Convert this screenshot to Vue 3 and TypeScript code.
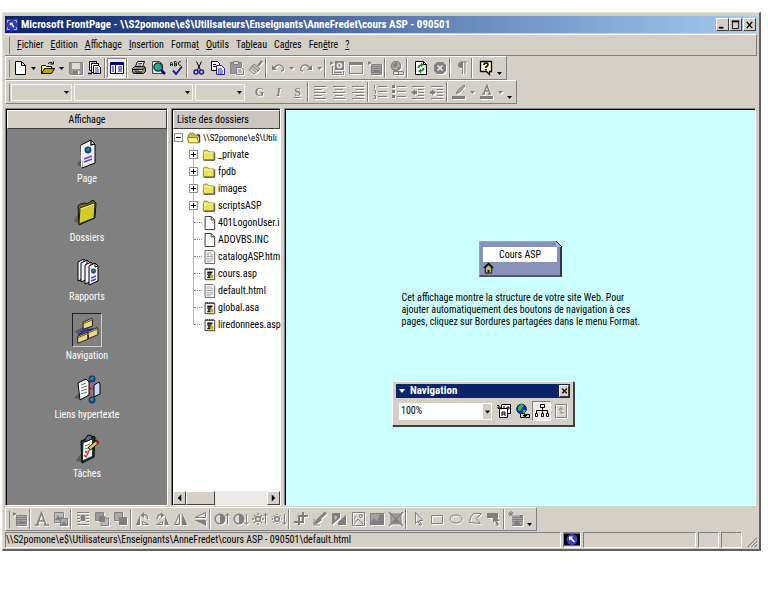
<script setup lang="ts">
import { ref } from 'vue'

type Item = { kind: 'icon' | 'arrow' | 'more' | 'sep' | 'wide'; name?: string; label?: string; off?: boolean; on?: boolean }

const icon = (name: string, label: string): Item => ({ kind: 'icon', name, label })
const off = (name: string, label: string): Item => ({ kind: 'icon', name, label, off: true })
const arrow: Item = { kind: 'arrow' }
const arrowOff: Item = { kind: 'arrow', off: true }
const sep: Item = { kind: 'sep' }
const wide: Item = { kind: 'wide' }
const more: Item = { kind: 'more' }

const G = '#808080'
const glyphs: Record<string, string> = {
  new: '<path d="M3.5 1.5h6l4 4v9h-10z" fill="#fff" stroke="#000"/><path d="M9.500 1.500v4h4" fill="none" stroke="#000"/>',
  open: '<path d="M1.500 13.500v-8h4l1 1h5v3" fill="#ffff66" stroke="#000"/><path d="M1.500 13.500l3-5h10l-3 5z" fill="#b5a800" stroke="#000"/><path d="M8 3.500q3-2.500 5 0M13.500 1.500v2.500h-3" fill="none" stroke="#000"/>',
  save: `<path d="M1.500 2.500h13v12h-12l-1-1z" fill="#999" stroke="${G}"/><path d="M4 3h8v6H4z" fill="#dedbd5"/><path d="M5 11h7v3H5z" fill="${G}"/><path d="M10 11h1.500v3H10z" fill="#fff"/>`,
  publish: '<path d="M2.500 1.500h7v9h-7z" fill="#fff" stroke="#000"/><path d="M4.500 3.500h7v9h-7z" fill="#fff" stroke="#000"/><path d="M6.500 5.500h5l2 2v6h-7z" fill="#fff" stroke="#000"/><path d="M8 8h3M8 10h4M4 3h4M8 12h4" stroke="#333399"/><path d="M1 13.500h4" stroke="#000080" stroke-width="1.500"/>',
  folders: '<path d="M1.500 2.500h13v11h-13z" fill="#fff" stroke="#000080"/><path d="M1 3h14v2H1z" fill="#000080"/><path d="M6.500 4v9" stroke="#000080"/><path d="M3 7h2M3 9h2M3 11h2" stroke="#000080"/><path d="M9 7h4M9 9h4M9 11h4" stroke="#000080"/>',
  print: '<path d="M4.500 6.500l2-5h7l-2 5" fill="#fff" stroke="#000"/><path d="M7 3.500h4M6.500 5h4" stroke="#555"/><path d="M1.500 8.500l2-2h10l1 2v3l-2 2h-10l-1-2z" fill="#888" stroke="#000"/><path d="M2 9.500h10l2-2M4 12h7" stroke="#111" fill="none"/><path d="M8 10.500h3" stroke="#ffff00"/>',
  preview: '<path d="M2.500 1.500h7l3 3v9h-10z" fill="#eee" stroke="#444"/><circle cx="8" cy="7" r="4.200" fill="#22a0b0" stroke="#000"/><path d="M5 6l2-2 2 1-1 3-3 1z" fill="#33bb44"/><path d="M11 10l4 4" stroke="#000080" stroke-width="2.500"/>',
  spell: '<path d="M1.500 6V3.500l1-1.500 1 1.500V6M1.500 4.500h2M5.500 1.500V6h1.500l1-1-1-1H5.500M5.500 1.500h1.500l1 1-1 1.500M12 2l-1-.500-1.500 1v2l1.500 1 1-.500" fill="none" stroke="#222"/><path d="M4 10.500l3 3.500 6-7.500" fill="none" stroke="#1c1ca0" stroke-width="2"/>',
  cut: '<path d="M5.500 1.500l4 8.500M10.500 1.500l-4 8.500" stroke="#000" fill="none"/><circle cx="5" cy="12" r="2" fill="none" stroke="#1c1ca0" stroke-width="1.500"/><circle cx="10.500" cy="12" r="2" fill="none" stroke="#1c1ca0" stroke-width="1.500"/>',
  copy: '<path d="M1.500 1.500h6l2 2v7h-8z" fill="#fff" stroke="#000"/><path d="M3 4.500h3M3 6.500h4" stroke="#000080"/><path d="M6.500 5.500h5l3 3v6h-8z" fill="#fff" stroke="#1c1ca0"/><path d="M8 9h4M8 11h5M8 13h5" stroke="#1c1ca0"/>',
  paste: `<path d="M1.500 2.500h11v11h-11z" fill="#999" stroke="${G}"/><path d="M4.500 1.500h5v3h-5z" fill="#ddd" stroke="${G}"/><path d="M7.500 7.500h5l2 2v5h-7z" fill="#e8e6e2" stroke="${G}"/><path d="M9 10h3M9 12h4" stroke="${G}"/>`,
  brush: `<path d="M14 1l-4 5" stroke="${G}" stroke-width="2.500"/><path d="M6 4l6 5-2 2-6-5z" fill="#bbb" stroke="${G}"/><path d="M4 6l6 5-4 3-5-4z" fill="#d4d0c8" stroke="${G}"/><path d="M3 8l5 4" stroke="${G}"/>`,
  undo: `<path d="M2 5v5h5z" fill="${G}"/><path d="M4 8q3-4 6-3t3.500 4q0 2-2.500 2" fill="none" stroke="${G}" stroke-width="1.300"/>`,
  redo: `<path d="M14 5v5H9z" fill="${G}"/><path d="M12 8q-3-4-6-3T2.500 9q0 2 2.500 2" fill="none" stroke="${G}" stroke-width="1.300"/>`,
  component: `<path d="M1 1l4 2-4 2zM6 1h9v9H6z" fill="${G}"/><circle cx="10.500" cy="5.500" r="3" fill="#ddd"/><path d="M9 5l2-1v3z" fill="${G}"/><path d="M3.500 6v8.500h11V11" fill="none" stroke="${G}"/><path d="M5 12.500h8" stroke="${G}" stroke-width="1.500"/>`,
  table: `<path d="M1.500 2.500h13v11h-13z" fill="none" stroke="${G}"/><path d="M1 2h14v3H1z" fill="${G}"/>`,
  picture: `<path d="M1 1l4 2-4 2z" fill="${G}"/><path d="M4.500 4.500h10v10h-10z" fill="#aaa" stroke="${G}"/><path d="M5 6.500h9M5 8.500h9M5 10.500h9M5 12.500h9" stroke="${G}"/><path d="M5 13l4-4 2 2 1-1 2 3z" fill="${G}"/>`,
  link: `<circle cx="7" cy="6" r="4.500" fill="#b0aeaa" stroke="${G}" stroke-width="1.500"/><path d="M4 5l3-3 2 1-1 3-3 2zM8 7l3 0-1 3z" fill="${G}"/><path d="M4.500 11.500h5v3h-5zM9.500 11.500h5v3h-5z" fill="#ddd" stroke="${G}"/>`,
  refresh: '<path d="M2.500 1.500h8l3 3v10h-11z" fill="#fff" stroke="#000"/><path d="M10.500 1.500v3h3" fill="none" stroke="#000"/><path d="M5.500 8q0-3 3.500-3M10.500 8q0 3-3.500 3" fill="none" stroke="#118822" stroke-width="1.700"/><path d="M8 2.500l3 2.500-3 2zM8 9l-3 2 3 2.500z" fill="#118822"/>',
  stop: `<path d="M5 2h6l3 3v6l-3 3H5l-3-3V5z" fill="${G}"/><path d="M5.500 5.500l5 5M10.500 5.500l-5 5" stroke="#eee" stroke-width="1.500"/>`,
  para: `<path d="M6 2h7M8.500 2v12M11 2v12" stroke="${G}" fill="none"/><path d="M8.500 2H7Q4 2 4 5t3 3h1.500z" fill="${G}"/>`,
  help: '<path d="M2.500 1.500h11v10h-2v3l-3-3h-6z" fill="#ffffcc" stroke="#000" stroke-width="1.300"/><path d="M6 5q0-2 2-2t2 1.800q0 1-2 2.200v1" fill="none" stroke="#000" stroke-width="1.500"/><path d="M7.200 9h1.600v1.500H7.200z"/>',
  left: `<path d="M2 2.500h12M2 5.500h8M2 8.500h12M2 11.500h8M2 14.500h12" stroke="${G}"/>`,
  center: `<path d="M2 2.500h12M4 5.500h8M2 8.500h12M4 11.500h8M2 14.500h12" stroke="${G}"/>`,
  right: `<path d="M2 2.500h12M6 5.500h8M2 8.500h12M6 11.500h8M2 14.500h12" stroke="${G}"/>`,
  numbers: `<path d="M2.500 1v3.500M1.500 6.500h2v3M1.500 11.500h2v3h-2M6 2.500h9M6 7.500h9M6 12.500h9" fill="none" stroke="${G}"/>`,
  bullets: `<path d="M1 1h3v3H1zM1 6h3v3H1zM1 11h3v3H1z" fill="${G}"/><path d="M6 2.500h9M6 7.500h9M6 12.500h9" stroke="${G}"/>`,
  outdent: `<path d="M2 2.500h12M8 5.500h6M8 8.500h6M8 11.500h6M2 14.500h12" stroke="${G}"/><path d="M1 8.500l4-3v6zM5 7h2v3H5z" fill="${G}"/>`,
  indent: `<path d="M2 2.500h12M8 5.500h6M8 8.500h6M8 11.500h6M2 14.500h12" stroke="${G}"/><path d="M7 8.500l-4-3v6zM1 7h2v3H1z" fill="${G}"/>`,
  highlight: `<path d="M1 12h13v3H1z" fill="${G}"/><path d="M13 1L7 6l-2 4 4-2 5-6z" fill="#aaa" stroke="${G}"/>`,
  fontcolor: `<path d="M1 12h13v3H1z" fill="${G}"/><path d="M3 10h3M9 10h3M4.500 10L8 1.500l3 8.500M5.500 7h5" fill="none" stroke="${G}" stroke-width="1.500"/>`,
  bigA: `<path d="M1 14h4M10 14h5M3 14L7.500 2 12 14M5 10h6" fill="none" stroke="${G}" stroke-width="1.700"/>`,
  auto: `<path d="M1.500 1.500h9v10h-9z" fill="#bbb" stroke="${G}"/><path d="M2 9l3-5 2 3 2-2 1 5z" fill="${G}"/><path d="M7.500 7.500h7v7h-7z" fill="#aaa" stroke="${G}"/><path d="M8 14l3-4 3 4z" fill="${G}"/>`,
  wrap: `<path d="M2 1.500h12M2 4.500h3M11 4.500h3M2 7.500h3M11 7.500h3M2 10.500h3M11 10.500h3M2 13.500h12" stroke="${G}"/><path d="M5.500 4.500l2.500-1 2.500 1V10h-5z" fill="${G}"/>`,
  forward: `<path d="M1.500 1.500h8v8h-8z" fill="#999" stroke="${G}"/><path d="M7 11.500v3h7.500V7H11" fill="#bbb" stroke="${G}"/><path d="M5 5h6v6H5z" fill="${G}"/>`,
  back: `<path d="M1.500 1.500h8v8h-8z" fill="#aaa" stroke="${G}"/><path d="M6 6h8v8H6z" fill="${G}"/>`,
  rotl: `<path d="M1 14L5 4v10z" fill="${G}"/><path d="M7.500 13.500v-3l6 3z" fill="none" stroke="${G}"/><path d="M7 4q5-2 6 4" fill="none" stroke="${G}" stroke-width="1.500"/><path d="M9 1L5.500 4.500 9 7z" fill="${G}"/>`,
  rotr: `<path d="M15 14L11 4v10z" fill="${G}"/><path d="M8.500 13.500v-3l-6 3z" fill="none" stroke="${G}"/><path d="M9 4Q4 2 3 8" fill="none" stroke="${G}" stroke-width="1.500"/><path d="M7 1l3.500 3.500L7 7z" fill="${G}"/>`,
  fliph: `<path d="M1.500 13.500L6.500 3v10.500z" fill="none" stroke="${G}"/><path d="M9 14V2l5.500 12z" fill="${G}"/>`,
  flipv: `<path d="M13.500 1.500v5H3z" fill="none" stroke="${G}"/><path d="M14 9v6L2 9z" fill="${G}"/>`,
  contUp: `<circle cx="6" cy="8" r="4.800" fill="#ddd" stroke="${G}" stroke-width="1.500"/><path d="M6 3a5 5 0 0 1 0 10z" fill="${G}"/><path d="M13.500 13V3M11.500 5l2-2.500 2 2.500" fill="none" stroke="${G}"/>`,
  contDn: `<circle cx="6" cy="8" r="4.800" fill="#ddd" stroke="${G}" stroke-width="1.500"/><path d="M6 3a5 5 0 0 1 0 10z" fill="${G}"/><path d="M13.500 3v10M11.500 11l2 2.500 2-2.500" fill="none" stroke="${G}"/>`,
  briUp: `<circle cx="6" cy="8" r="2.500" fill="#ddd" stroke="${G}" stroke-width="1.500"/><path d="M6 2v2M6 12v2M0 8h2M10 8h2M2 4l1.500 1.500M10 4L8.500 5.500M2 12l1.500-1.500M10 12l-1.500-1.500" stroke="${G}" stroke-width="1.300"/><path d="M13.500 13V3M11.500 5l2-2.500 2 2.500" fill="none" stroke="${G}"/>`,
  briDn: `<circle cx="6" cy="8" r="2.300" fill="#ddd" stroke="${G}" stroke-width="1.500"/><path d="M6 3v1M6 12v1M1 8h1M10 8h1M2.500 4.500l1 1M9.500 4.500l-1 1M2.500 11.500l1-1M9.500 11.500l-1-1" stroke="${G}" stroke-width="1.300"/><path d="M13.500 3v10M11.500 11l2 2.500 2-2.500" fill="none" stroke="${G}"/>`,
  crop: `<path d="M6 4v10M10 1v10M1 11h10M5 5h10" fill="none" stroke="${G}" stroke-width="2"/>`,
  line: `<path d="M14 1.500L7 8" stroke="${G}" stroke-width="3"/><path d="M7 6l3 3-5 4-3 1 1-4z" fill="${G}"/><path d="M2 8v6h6" fill="none" stroke="${G}"/>`,
  bw: `<path d="M1 2h8v5L1 14z" fill="${G}"/><path d="M15 14H7V11l8-7z" fill="${G}"/><path d="M3 5h3v2l-2 2z" fill="#bbb"/>`,
  wash: `<path d="M2.500 1.500h12v13h-12z" fill="none" stroke="${G}"/><circle cx="11" cy="5" r="1.500" fill="none" stroke="${G}"/><path d="M4 13l4-5 5 5M4 8l2-3" fill="none" stroke="${G}"/>`,
  bevel: `<path d="M1 2h14v12H1z" fill="#a5a39f"/><path d="M1 14V12l4-5 3 3 3-7 4 1v10z" fill="${G}"/><path d="M1.500 2.500h13v11h-13z" fill="none" stroke="${G}"/>`,
  resample: `<path d="M3 3h10v10H3z" fill="#a5a39f" stroke="${G}"/><path d="M1 1l14 14M15 1L1 15" stroke="${G}" stroke-width="1.500"/><path d="M4 12l4-6 4 6z" fill="${G}"/>`,
  select: `<path d="M5.500 1.500v11l2.500-2.500 2 4.500 1.500-.700-2-4.300h3.500z" fill="none" stroke="${G}"/>`,
  rect: `<path d="M2.500 4.500h11v8h-11z" fill="none" stroke="${G}"/>`,
  oval: `<ellipse cx="8" cy="8" rx="6" ry="4" fill="none" stroke="${G}"/>`,
  poly: `<path d="M2.500 11.500l1-5 3-4h8l-5 5 4 5z" fill="none" stroke="${G}"/>`,
  hotspot: `<path d="M1 2h11v5H1z" fill="${G}"/><path d="M7 3v9l2-2 2 5 2-1-2-4h3z" fill="${G}"/>`,
  addpic: `<path d="M1 1l4 4M5 1L1 5M3 0v6M0 3h6" stroke="${G}"/><path d="M4 4h11v11H4z" fill="#aaa"/><path d="M4 6.500h11M4 8.500h11M4 10.500h11" stroke="${G}"/><path d="M4 15l5-6 5 6zM12 4h3v3h-3z" fill="${G}"/>`,
  rotate: '<path d="M5.500 1.500h9v9h-9z" fill="#fff" stroke="#000"/><path d="M7 4h2M11 4h2v2h-2z" fill="none" stroke="#000"/><path d="M3.500 5.500h8v9h-8z" fill="#fff" stroke="#000"/><path d="M6 13V9h3v4M6 11h3M1 2.500h2v3M1.500 4L3 6l1.500-2" fill="none" stroke="#000"/>',
  globe: '<circle cx="6.500" cy="6" r="4.800" fill="#1838b8" stroke="#001060"/><path d="M3 4l3-3 3 1-2 3-2 3-2-1zM8 7l3 0-1 3-2 0z" fill="#33bb44"/><path d="M5.500 10.500h4v4h-4zM10.500 11.500h4v3h-4z" fill="#d4d0c8" stroke="#000"/><path d="M8 12.500h4" stroke="#000"/>',
  tree: '<path d="M6.500 1.500h4v3h-4z" fill="#fff" stroke="#000"/><path d="M8.500 5v5M2.500 10V7.500h11V10" fill="none" stroke="#000"/><path d="M1.500 10.500h2v3h-2zM7.500 10.500h2v3h-2zM12.500 10.500h2v3h-2z" fill="#fff" stroke="#000"/>',
  external: `<path d="M2.500 1.500h11v13h-11z" fill="none" stroke="${G}"/><path d="M6 7l2-2.500L10 7M8 5v5h3" fill="none" stroke="${G}"/>`,
}

const standard: Item[] = [
  icon('new', 'Nouvelle page'), arrow, icon('open', 'Ouvrir'), arrow, off('save', 'Enregistrer'), icon('publish', 'Publier'), sep,
  { kind: 'icon', name: 'folders', label: 'Liste des dossiers', on: true }, sep,
  icon('print', 'Imprimer'), icon('preview', 'Aperçu'), icon('spell', 'Orthographe'), sep,
  icon('cut', 'Couper'), icon('copy', 'Copier'), off('paste', 'Coller'), off('brush', 'Reproduire la mise en forme'), sep,
  off('undo', 'Annuler'), arrowOff, off('redo', 'Rétablir'), arrowOff, sep,
  off('component', 'Composant'), off('table', 'Tableau'), off('picture', 'Image'), sep,
  off('link', 'Lien hypertexte'), wide, icon('refresh', 'Actualiser'), off('stop', 'Arrêter'), sep,
  off('para', 'Afficher tout'), wide, icon('help', 'Aide'), more,
]
const formatting: Item[] = [
  off('G', 'Gras'), off('I', 'Italique'), off('S', 'Souligné'), sep,
  off('left', 'Aligner à gauche'), off('center', 'Centrer'), off('right', 'Aligner à droite'), sep,
  off('numbers', 'Numérotation'), off('bullets', 'Puces'), off('outdent', 'Diminuer le retrait'), off('indent', 'Augmenter le retrait'), sep,
  off('highlight', 'Surlignage'), arrowOff, off('fontcolor', 'Couleur de police'), arrowOff, more,
]
const pictures: Item[] = [
  off('picture', 'Insérer une image'), sep, off('bigA', 'Texte'), off('auto', 'Miniature'), sep,
  off('wrap', 'Position'), off('forward', 'Avancer'), off('back', 'Reculer'), sep,
  off('rotl', 'Rotation à gauche'), off('rotr', 'Rotation à droite'), off('fliph', 'Retourner horizontalement'), off('flipv', 'Retourner verticalement'), sep,
  off('contUp', 'Plus de contraste'), off('contDn', 'Moins de contraste'), off('briUp', 'Plus de luminosité'), off('briDn', 'Moins de luminosité'), sep,
  off('crop', 'Rogner'), off('line', 'Couleur transparente'), off('bw', 'Noir et blanc'), off('wash', 'Délaver'), off('bevel', 'Biseau'), off('resample', 'Rééchantillonner'), sep,
  off('select', 'Sélectionner'), off('rect', 'Zone rectangulaire'), off('oval', 'Zone circulaire'), off('poly', 'Zone polygonale'), off('hotspot', 'Zones réactives'), sep,
  off('addpic', 'Restaurer'), more,
]
const bars = [standard, formatting, pictures]

const menus = [
  ['', 'F', 'ichier'], ['', 'E', 'dition'], ['', 'A', 'ffichage'], ['', 'I', 'nsertion'], ['Forma', 't', ''],
  ['', 'O', 'utils'], ['Ta', 'b', 'leau'], ['Ca', 'd', 'res'], ['Fen', 'ê', 'tre'], ['', '?', ''],
]

const smallGlobe = (x: number, y: number, r: number) =>
  `<circle cx="${x}" cy="${y}" r="${r}" fill="#174a9c" stroke="#0a2050" stroke-width=".6"/><path d="M${x - r * 0.7} ${y}l${r * 0.6}-${r * 0.6}h${r * 0.6}l-${r * 0.3} ${r}z" fill="#2aa06a"/>`
const leaf = (x: number, y: number) =>
  `<path d="M${x} ${y + 3}l6-3 3 3v15l-9 4z" fill="#f4f4ff" stroke="#000"/><path d="M${x + 6} ${y}v4l3-1" fill="none" stroke="#000"/>`

const views = [
  { name: 'Page', art: `<path d="M8 29l5-6v10z" fill="#5a5a5a"/><path d="M12 10l10-5 4 4v19l-13 5z" fill="#f2f2ff" stroke="#000"/><path d="M12.500 10.500v22" stroke="#fff"/><path d="M22 5v5l4-1" fill="none" stroke="#000" stroke-width="1.300"/>${smallGlobe(19, 15, 3.2)}<path d="M15 24l8-3M15 27l8-3" stroke="#5544dd" stroke-width="1.500"/>` },
  { name: 'Dossiers', art: '<path d="M5 27l4-7v9z" fill="#5a5a5a"/><path d="M9 12l2-2 5-1 2 1 6-4 3 3-1 15-16 7z" fill="#6d6d10" stroke="#111"/><path d="M11 14l15-5-1 15-15 6z" fill="#d2cc28" stroke="#222"/><path d="M11.500 15l13.500-5" stroke="#f8f470"/>' },
  { name: 'Rapports', art: `${leaf(9, 6)}${leaf(12, 7)}${leaf(16, 9)}${leaf(20, 10)}${smallGlobe(24.5, 18, 2.2)}<path d="M22 25l5-2M22 28l5-2" stroke="#5544dd" stroke-width="1.500"/>` },
  { name: 'Navigation', on: true, art: '<path d="M2 20l11-6 8 5-13 6z" fill="#595959"/><path d="M19 14v6M7 24l10-6 12 0M10 20l16-4" fill="none" stroke="#2222cc" stroke-width="1.500"/><path d="M13 8l11-5 1 2v8l-12 4z" fill="#e8d88a" stroke="#000"/><path d="M13 10l12-5" stroke="#443300"/><path d="M19 20l12-5 1 2v7l-12 5z" fill="#e8d88a" stroke="#000"/><path d="M19 22l12-5" stroke="#443300"/><path d="M6 26l12-5 1 2v7l-13 5z" fill="#e8d88a" stroke="#000"/><path d="M6 28l12-5" stroke="#443300"/>' },
  { name: 'Liens hypertexte', art: `<path d="M5 27l5-5v6z" fill="#5a5a5a"/><path d="M18 17L23 8M18 17h8M18 18l5 10" stroke="#dd3344" fill="none"/><path d="M9 12l8-4 3 3v13l-9 5z" fill="#fff" stroke="#000"/><path d="M12 14l5-2M12 17l6-2M12 20l6-2M12 23l6-2" stroke="#777"/>${smallGlobe(23, 8, 3.2)}${smallGlobe(23, 29, 3.2)}<path d="M25 14l5-3 1 2v10l-6 3z" fill="#cdd6ff" stroke="#000"/><path d="M21 16l3 1.500-3 2z" fill="#d22"/>` },
  { name: 'Tâches', art: '<path d="M7 31l6-9v10z" fill="#5a5a5a"/><path d="M12 11l12-5 2 1-1 20-12 6z" fill="#174030" stroke="#000"/><path d="M14.500 13l8.500-4v17l-9 4z" fill="#fff"/><path d="M16 9l3-4 4 1v3l-7 3z" fill="#667" stroke="#000"/><path d="M16 16l5-2M16 19l6-2M16 22l5-2" stroke="#777"/><path d="M15 25l2 2 3-6M16 21l2 2" fill="none" stroke="#e02020" stroke-width="1.300"/><path d="M20 19l9-8" stroke="#000" stroke-width="4"/><path d="M20.500 18.500l7-6" stroke="#f0d020" stroke-width="2.500"/><path d="M27.500 12.500l1.500-1.500" stroke="#c02020" stroke-width="3"/>' },
]

const fileArt: Record<string, string> = {
  root: '<path d="M1.500 13.500v-9l2-2h4l1 2h5v3" fill="#c9c44a" stroke="#77751c"/><path d="M2 13.500l-1.500-6h11l2 6z" fill="#f7f38a" stroke="#77751c"/><path d="M14.500 13.500v-9h-3" fill="none" stroke="#000"/>',
  folder: '<path d="M1.500 13.500v-9l1-2h4l1 2h6v9z" fill="#e9e45c" stroke="#88861e"/><path d="M2 5.500h11" stroke="#fffcc0"/><path d="M2 14h12.500V5" fill="none" stroke="#333"/>',
  blank: '<path d="M3.500 .5h7l4 4v11h-11z" fill="#fff" stroke="#222"/><path d="M10.500 .5v4h4" fill="none" stroke="#222"/>',
  html: '<path d="M3.500 .5h9l2 2v13h-11z" fill="#fff" stroke="#555"/><path d="M5 3.500h6M5 5.500h3M9 5.500h4M5 7.500h8M5 9.500h3M9 9.500h4M5 11.500h8M5 13.500h5" stroke="#999"/>',
  script: '<path d="M3.500 2.500h11v12h-11z" fill="#fff" stroke="#222"/><path d="M4 2h10" stroke="#222" stroke-width="2" stroke-dasharray="1 1"/><path d="M6 6h6M6 8h5M7 10h4M6 12h4" stroke="#111" stroke-width="1.500"/><path d="M9 9h4v4H9z" fill="#b8b020"/>',
}
const files = [
  ['folder', '_private'], ['folder', 'fpdb'], ['folder', 'images'], ['folder', 'scriptsASP'],
  ['blank', '401LogonUser.i'], ['blank', 'ADOVBS.INC'], ['html', 'catalogASP.htm'], ['script', 'cours.asp'],
  ['html', 'default.html'], ['script', 'global.asa'], ['script', 'liredonnees.asp'],
]
const letters = ['G', 'I', 'S']
const zoomLevel = ref('100%')
</script>

<template>
  <div class="desktop">
    <div class="window">
      <header class="title">
        <svg class="app" viewBox="0 0 16 16" aria-hidden="true"><path d="M0 0h16v16H0z" fill="#2c38c0" /><path d="M2 5V2h3M11 2h3v3M14 11v3h-3M5 14H2v-3" fill="none" stroke="#dde" /><path d="M5 5h5L8.500 6.500l3 4-1.500 1-3-4L5 9z" fill="#fff" /></svg>
        <h1>Microsoft FrontPage - \\S2pomone\e$\Utilisateurs\Enseignants\AnneFredet\cours ASP - 090501</h1>
        <div class="caption">
          <button aria-label="Réduire"><svg viewBox="0 0 10 10"><path d="M1 8h5" stroke="#000" stroke-width="2" /></svg></button>
          <button aria-label="Agrandir"><svg viewBox="0 0 10 10"><path d="M1.500 1v8h7V1" fill="none" stroke="#000" /><path d="M1 1h8" stroke="#000" stroke-width="2" /></svg></button>
          <button class="close" aria-label="Fermer"><svg viewBox="0 0 10 10"><path d="M2 1.500l6 7M8 1.500l-6 7" stroke="#000" stroke-width="1.600" /></svg></button>
        </div>
      </header>

      <nav class="menu">
        <button v-for="m in menus" :key="m.join('')">{{ m[0] }}<u>{{ m[1] }}</u>{{ m[2] }}</button>
      </nav>

      <template v-for="(bar, n) in bars" :key="n">
        <main v-if="n === 2" class="work">
          <section class="views">
            <h2>Affichage</h2>
            <button v-for="v in views" :key="v.name" :class="{ chosen: v.on }">
              <svg viewBox="0 0 36 36" aria-hidden="true" v-html="v.art" />
              <span>{{ v.name }}</span>
            </button>
          </section>

          <section class="folders">
            <h2>Liste des dossiers</h2>
            <ul class="tree">
              <li class="root">
                <i class="box" /><svg viewBox="0 0 16 16" v-html="fileArt.root" /><span>\\S2pomone\e$\Utili</span>
              </li>
              <li v-for="f in files" :key="f[1]" class="leaf">
                <i v-if="f[0] === 'folder'" class="box plus" /><i v-else class="twig" />
                <svg viewBox="0 0 16 16" v-html="fileArt[f[0]]" /><span>{{ f[1] }}</span>
              </li>
            </ul>
            <div class="scroll">
              <button aria-label="Défiler à gauche"><svg viewBox="0 0 8 8"><path d="M6 0v8L2 4z" /></svg></button>
              <span class="thumb" /><span class="track" />
              <button aria-label="Défiler à droite"><svg viewBox="0 0 8 8"><path d="M2 0v8l4-4z" /></svg></button>
            </div>
          </section>

          <section class="canvas">
            <div class="node">
              <a href="#">Cours ASP</a>
              <svg viewBox="0 0 12 12" aria-hidden="true"><path d="M1 6l5-5 5 5" fill="none" stroke="#000" stroke-width="1.500" /><path d="M2.500 6v5.500h7V6L6 2.500z" fill="#c8b860" stroke="#000" /><path d="M5 8h2v3H5z" /></svg>
              <svg class="fold" viewBox="0 0 6 6" aria-hidden="true"><path d="M0 0h6v6z" fill="#ccffff" /><path d="M0 0v6h6z" fill="#aab2d4" /><path d="M0 0l6 6" stroke="#111" /></svg>
            </div>
            <p>Cet affichage montre la structure de votre site Web. Pour ajouter automatiquement des boutons de navigation à ces pages, cliquez sur Bordures partagées dans le menu Format.</p>

            <div class="palette">
              <header><svg viewBox="0 0 8 8"><path d="M1 2h6L4 6z" fill="#fff" /></svg><h3>Navigation</h3><button aria-label="Fermer la barre"><svg viewBox="0 0 8 8"><path d="M1.500 1.500l5 5M6.500 1.500l-5 5" stroke="#000" stroke-width="1.500" /></svg></button></header>
              <div class="tools">
                <div class="combo zoom">
                  <select v-model="zoomLevel" aria-label="Zoom"><option>100%</option><option>75%</option><option>50%</option></select>
                  <svg viewBox="0 0 8 8"><path d="M2 3h5L4.500 6z" /></svg>
                </div>
                <button class="tool" aria-label="Portrait ou paysage"><svg viewBox="0 0 16 16" v-html="glyphs.rotate" /></button>
                <button class="tool" aria-label="Page externe"><svg viewBox="0 0 16 16" v-html="glyphs.globe" /></button>
                <button class="tool pressed" aria-label="Inclure dans les barres de navigation"><svg viewBox="0 0 16 16" v-html="glyphs.tree" /></button>
                <button class="tool dim" disabled aria-label="Sous-arborescence"><svg viewBox="0 0 16 16" v-html="glyphs.external" /></button>
              </div>
            </div>
          </section>
        </main>

        <div class="bar" role="toolbar">
          <template v-if="n === 1">
            <div v-for="c in ['style', 'police', 'taille']" :key="c" class="combo flat" :class="c">
              <select disabled :aria-label="c"><option></option></select>
              <svg viewBox="0 0 8 8"><path d="M1 3h5L3.500 6z" /></svg>
            </div>
          </template>
          <template v-for="(t, k) in bar" :key="k">
            <button v-if="t.kind === 'icon'" class="tool" :class="{ dim: t.off, pressed: t.on }" :disabled="t.off" :aria-label="t.label">
              <b v-if="letters.includes(t.name!)" :class="'l' + t.name">{{ t.name }}</b>
              <svg v-else viewBox="0 0 16 16" v-html="glyphs[t.name!]" />
            </button>
            <button v-else-if="t.kind === 'arrow'" class="drop" :class="{ dim: t.off }" :disabled="t.off" aria-label="Options"><svg viewBox="0 0 8 8"><path d="M1 3h5L3.500 6z" :fill="t.off ? '#808080' : '#000'" /></svg></button>
            <button v-else-if="t.kind === 'more'" class="drop low" aria-label="Autres boutons"><svg viewBox="0 0 8 8"><path d="M1 2h5L3.500 5z" /></svg></button>
            <i v-else :class="t.kind" />
          </template>
        </div>
      </template>

      <footer class="status">
        <span class="path">\\S2pomone\e$\Utilisateurs\Enseignants\AnneFredet\cours ASP - 090501\default.html</span>
        <span class="badge"><svg viewBox="0 0 16 12"><path d="M0 0h16v12H0z" /><circle cx="8" cy="6" r="5.500" fill="#3c3ccc" /><path d="M5 3h4L8 4.500l3 3.500-1 1-3.500-3L5 7z" fill="#fff" /></svg></span>
        <span class="info" /><span class="key" /><span class="key" />
        <svg class="grip" viewBox="0 0 12 12"><path d="M1 12L12 1M5 12l7-7M9 12l3-3" stroke="#808080" stroke-width="1.300" /><path d="M3 12l9-9M7 12l5-5" stroke="#fff" /></svg>
      </footer>
    </div>
  </div>
</template>

<style>
body { margin: 0; background: #fff; }
</style>

<style scoped>
* { box-sizing: border-box; }
.desktop {
  display: flex;
  min-height: 100vh;
  padding: 12px 7px 40px 2px;
  font: 10px/12px "Roboto Condensed", "DejaVu Sans Condensed", sans-serif;
  color: #000;
}
button { padding: 0; border: 0; background: none; font: inherit; color: inherit; }
svg { display: block; flex: none; }
h1, h2, h3, p, ul { margin: 0; padding: 0; font: inherit; }
.window {
  flex: 1;
  min-width: 0;
  display: flex;
  flex-direction: column;
  padding: 3px 2px 1px 2px;
  background: #d4d0c8;
  border: 1px solid #e4e2dd;
  border-right: 2px solid #606060;
  border-bottom: 2px solid #606060;
}
.title {
  display: flex;
  align-items: center;
  gap: 3px;
  height: 17px;
  padding: 0 1px;
  background: linear-gradient(90deg, #0a246a, #a6caf0);
  color: #fff;
}
.app { width: 12px; height: 14px; }
.title h1 { flex: 1; font-size: 11px; font-weight: 700; white-space: nowrap; }
.caption { display: flex; }
.caption button, .palette header button {
  display: grid;
  place-items: center;
  width: 13px;
  height: 13px;
  background: #d4d0c8;
  border: 1px solid;
  border-color: #fff #404040 #404040 #fff;
}
.caption svg { width: 9px; height: 10px; }
.caption .close { margin-left: 1px; }
.menu {
  display: flex;
  align-items: center;
  gap: 7px;
  height: 22px;
  padding-left: 4px;
  margin-top: 1px;
  border-top: 1px solid #fff;
  border-right: 1px solid #808080;
  border-bottom: 1px solid #808080;
}
.menu::before, .bar::before {
  content: "";
  flex: none;
  width: 1px;
  height: 17px;
  background: #808080;
}
.bar {
  display: flex;
  align-items: center;
  align-self: flex-start;
  height: 24px;
  padding: 0 2px 0 3px;
  border: 1px solid;
  border-color: #fff #808080 #808080 #fff;
}
.tool {
  display: grid;
  place-items: center;
  flex: none;
  width: 19px;
  height: 20px;
}
.tool svg { width: 16px; height: 16px; }
.dim svg, .dim b { filter: drop-shadow(1px 1px 0 #fff); }
.pressed {
  background: #eeece8;
  border: 1px solid;
  border-color: #808080 #fff #fff #808080;
}
.tool b { font: 700 12px/14px "Liberation Serif", serif; color: #808080; }
.tool .lI { font-style: italic; }
.tool .lS { text-decoration: underline; }
.drop { width: 9px; height: 20px; display: grid; place-items: center; }
.drop svg { width: 8px; height: 8px; }
.low { align-items: end; }
.sep, .wide { flex: none; width: 3px; height: 20px; border-left: 1px solid #808080; box-shadow: inset 1px 0 #fff; }
.wide { width: 5px; }
.combo { display: grid; align-items: center; }
.combo select, .combo svg { grid-area: 1 / 1; }
.combo svg { z-index: 1; width: 8px; height: 8px; justify-self: end; margin-right: 1px; pointer-events: none; }
.combo select {
  appearance: none;
  width: 100%;
  height: 17px;
  padding: 0 12px 0 2px;
  border: 0;
  border-radius: 0;
  background: #fff;
  font: inherit;
  color: #000;
  opacity: 1;
}
.flat { margin-right: 2px; }
.flat select { background: #d4d0c8; border: 1px solid #f6f5f2; }
.style { width: 61px; margin-left: 1px; }
.police { width: 119px; }
.taille { width: 50px; margin-right: 5px; }

.work {
  flex: 1;
  display: grid;
  grid-template-columns: 163px 110px 1fr;
  gap: 3px;
  padding: 4px 1px 1px 0;
  min-height: 0;
}
.views, .folders, .canvas {
  min-width: 0;
  border: 1px solid;
  border-color: #808080 #fff #fff #808080;
  box-shadow: inset 1px 1px #000;
  padding: 1px 0 0 1px;
}
h2 {
  height: 19px;
  line-height: 18px;
  border: 1px solid;
  border-color: #fff #404040 #404040 #fff;
  background: #d4d0c8;
}
.views { background: #808080; color: #fff; display: flex; flex-direction: column; }
.views h2 { color: #000; text-align: center; margin-bottom: 6px; }
.views button {
  display: flex;
  flex-direction: column;
  align-items: center;
  gap: 2px;
  margin-bottom: 9px;
}
.views svg { width: 36px; height: 36px; }
.views .chosen svg { width: 30px; height: 34px; margin: 1px 0; border: 1px solid; border-color: #202020 #d4d0c8 #d4d0c8 #202020; }
.folders { background: #fff; display: flex; flex-direction: column; }
.folders h2 { padding-left: 3px; background: #cbc7bf; }
.tree { flex: 1; list-style: none; padding: 0 0 0 1px; }
.tree li { display: flex; align-items: center; height: 17px; white-space: nowrap; }
.tree svg { width: 14px; height: 16px; margin: 0 2px 0 4px; }
.tree .root { font-size: 9px; }
.leaf {
  padding-left: 15px;
  background: linear-gradient(#bbb, #bbb) 19px 0 / 1px 17px no-repeat;
}
.leaf:last-child { background-size: 1px 9px; }
.box {
  flex: none;
  width: 9px;
  height: 9px;
  border: 1px solid #909090;
  background: linear-gradient(#000, #000) center / 5px 1px no-repeat, #fff;
}
.plus { background: linear-gradient(#000, #000) center / 5px 1px no-repeat, linear-gradient(#000, #000) center / 1px 5px no-repeat, #fff; }
.twig { flex: none; width: 9px; padding-left: 5px; }
.twig::after { content: ""; display: block; width: 8px; border-top: 1px dotted #888; }
.scroll { display: flex; height: 14px; }
.scroll button, .thumb {
  display: grid;
  place-items: center;
  width: 13px;
  background: #d4d0c8;
  border: 1px solid;
  border-color: #fff #404040 #404040 #fff;
}
.scroll svg { width: 7px; height: 8px; }
.scroll .thumb { width: 29px; }
.track { flex: 1; background: #ebe9e5; }
.canvas {
  position: relative;
  display: flex;
  flex-direction: column;
  align-items: center;
  gap: 15px;
  padding-top: 132px;
  background: #ccffff;
}
.node {
  position: relative;
  width: 83px;
  height: 36px;
  padding: 5px 3px 0 3px;
  background: #8892b8;
  border: 1px solid #9aa4c8;
  border-right: 2px solid #2c3450;
  border-bottom: 2px solid #4c5470;
}
.node a { display: block; height: 15px; line-height: 15px; background: #fff; color: #000; text-align: center; text-decoration: none; }
.node > svg { width: 11px; height: 12px; }
.node .fold { position: absolute; top: -1px; right: -2px; width: 6px; height: 6px; }
.canvas p { width: 254px; padding-left: 8px; line-height: 12px; }
.palette {
  position: absolute;
  left: 107px;
  top: 272px;
  width: 182px;
  padding: 2px 3px 4px 3px;
  background: #d4d0c8;
  border: 1px solid;
  border-color: #fff #404040 #404040 #fff;
  box-shadow: 1px 1px #404040;
}
.palette header { display: flex; align-items: center; gap: 4px; height: 14px; padding: 0 1px 0 2px; background: #0a246a; color: #fff; }
.palette header svg { width: 8px; height: 8px; }
.palette h3 { flex: 1; font-size: 11px; font-weight: 700; }
.palette header button { width: 10px; height: 12px; }
.palette header button svg { width: 7px; height: 8px; }
.tools { display: flex; align-items: center; padding: 3px 0 0 3px; }
.zoom { width: 94px; margin-right: 2px; }
.zoom svg { background: #d4d0c8; height: 15px; }

.status { display: flex; align-items: stretch; gap: 2px; height: 16px; margin-top: 1px; }
.status span { border: 1px solid; border-color: #808080 #fff #fff #808080; }
.status .path { flex: 1; line-height: 14px; white-space: nowrap; overflow: hidden; }
.status .badge { width: 18px; }
.badge svg { width: 16px; height: 13px; }
.info { width: 113px; }
.key { width: 21px; }
.grip { width: 10px; height: 12px; align-self: end; margin-left: 3px; }
</style>
